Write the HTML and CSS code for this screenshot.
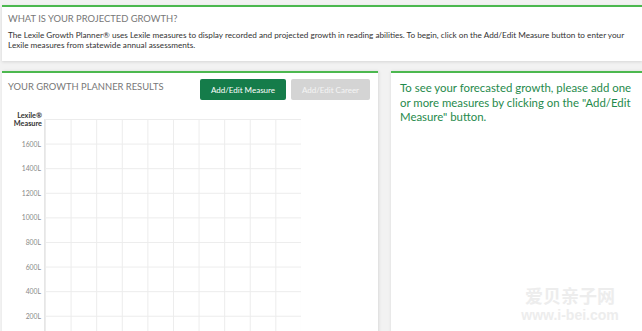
FILE: index.html
```html
<!DOCTYPE html>
<html lang="en">
<head>
    <meta charset="UTF-8">
    <meta name="viewport" content="width=device-width, initial-scale=1.0">
    <title>Lexile Growth Planner</title>
    <link rel="stylesheet" href="styles.css">
</head>
<body>
    <div class="intro-card">
        <h2>What is your projected growth?</h2>
        <p>The Lexile Growth Planner® uses Lexile measures to display recorded and projected growth in reading abilities. To begin, click on the Add/Edit Measure button to enter your Lexile measures from statewide annual assessments.</p>
    </div>

    <div class="results-row">
        <div class="results-card">
            <div class="results-head">
                <h2>Your Growth Planner Results</h2>
                <div class="buttons">
                    <button type="button" class="btn-measure">Add/Edit Measure</button>
                    <button type="button" class="btn-career">Add/Edit Career</button>
                </div>
            </div>
            <div class="chart">
                <div class="axis">
                    <div class="axis-title">Lexile®<br>Measure</div>
                    <div class="tick">1600L</div>
                    <div class="tick">1400L</div>
                    <div class="tick">1200L</div>
                    <div class="tick">1000L</div>
                    <div class="tick">800L</div>
                    <div class="tick">600L</div>
                    <div class="tick">400L</div>
                    <div class="tick">200L</div>
                </div>
                <div class="grid"></div>
            </div>
        </div>
        <div class="forecast-card">
            <p>To see your forecasted growth, please add one or more measures by clicking on the "Add/Edit Measure" button.</p>
            <div class="watermark">
                <div class="wm-cn">爱贝亲子网</div>
                <div class="wm-url">www.i-bei.com</div>
            </div>
        </div>
    </div>
</body>
</html>
```

FILE: styles.css
```css
body {
    font-family: Lato, "Noto Sans", sans-serif;
    background-color: #f2f2f2;
    margin: 0;
    height: 331px;
    overflow: hidden;
}

h2 {
    margin: 0;
    font-weight: normal;
    text-transform: uppercase;
    color: #777;
}

.intro-card {
    background-color: white;
    border-top: 2px solid #4cb84f;
    margin: 5px 0 0 2px;
    padding: 6px 6px 10px 6px;
    height: 38px;
    box-shadow: 0 1px 3px rgba(0, 0, 0, 0.12);
}

.intro-card h2 {
    font-size: 9.4px;
    line-height: 12px;
}

.intro-card p {
    margin: 5px 0 0 0;
    font-size: 8.2px;
    line-height: 10px;
    color: #333;
}

.results-row {
    display: flex;
    gap: 13px;
    margin: 10px 0 0 2px;
}

.results-card {
    width: 376px;
    height: 260px;
    background-color: white;
    border-top: 2px solid #4cb84f;
    box-shadow: 1px 0 3px rgba(0, 0, 0, 0.1);
}

.results-head {
    display: flex;
    justify-content: space-between;
    padding: 6px 8px 0 6px;
}

.results-head h2 {
    font-size: 9.4px;
    line-height: 12px;
    margin-top: 2px;
}

.buttons {
    display: flex;
    gap: 5px;
}

button {
    font-family: Lato, "Noto Sans", sans-serif;
    font-size: 8px;
    border: none;
    border-radius: 2px;
    height: 21px;
    padding: 0;
    color: white;
}

.btn-measure {
    width: 86px;
    background-color: #157c4a;
}

.btn-career {
    width: 79px;
    background-color: #d4d4d4;
    color: #f4f4f4;
}

.chart {
    display: flex;
    margin-top: 19px;
}

.axis {
    width: 42px;
    text-align: right;
}

.axis-title {
    font-size: 7.3px;
    font-weight: bold;
    line-height: 8px;
    color: #333;
    height: 27.6px;
    padding-right: 2px;
    margin-top: -7px;
}

.tick {
    font-size: 6.8px;
    color: #8a8a8a;
    height: 24.6px;
    line-height: 8px;
    padding-right: 3px;
}

.grid {
    width: 256px;
    height: 220px;
    border-left: 1px solid #e6e6e6;
    background-image:
        linear-gradient(to right, #ececec 1px, transparent 1px),
        linear-gradient(to bottom, #ececec 1px, transparent 1px);
    background-size: 25.6px 24.6px;
}

.forecast-card {
    flex: 1;
    position: relative;
    background-color: white;
    border-top: 2px solid #4cb84f;
    padding: 8px 10px 0 9px;
    box-shadow: 0 0 3px rgba(0, 0, 0, 0.1);
}

.forecast-card p {
    margin: 0;
    font-size: 11.4px;
    line-height: 14.5px;
    color: #1f8a4c;
}

/* faint site watermark over the empty card */
.watermark {
    position: absolute;
    left: 127px;
    top: 213px;
    width: 104px;
    text-align: center;
    color: #ededed;
    font-weight: bold;
}

.wm-cn {
    font-family: "Noto Sans CJK SC", sans-serif;
    font-size: 18px;
    line-height: 19px;
}

.wm-url {
    font-family: "Liberation Sans", sans-serif;
    font-size: 14px;
    line-height: 14px;
    margin-top: 3px;
}
```
